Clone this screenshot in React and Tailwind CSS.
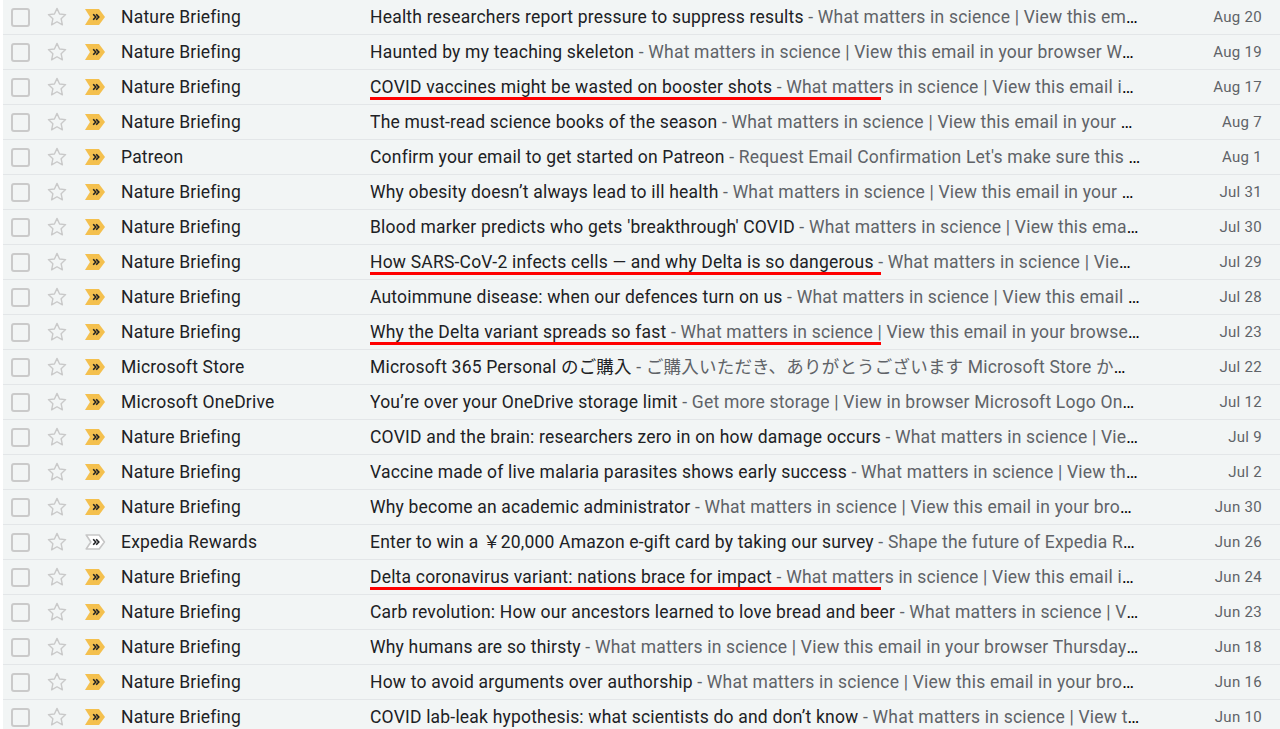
import React from "react";

const rows = [
  ["Nature Briefing", "Health researchers report pressure to suppress results", "What matters in science | View this email in your browser Friday 20 August 2021", "Aug 20"],
  ["Nature Briefing", "Haunted by my teaching skeleton", "What matters in science | View this email in your browser Wednesday 18 August 2021", "Aug 19"],
  ["Nature Briefing", "COVID vaccines might be wasted on booster shots", "What matters in science | View this email in your browser Tuesday 17 August 2021", "Aug 17", true],
  ["Nature Briefing", "The must-read science books of the season", "What matters in science | View this email in your browser Friday 6 August 2021", "Aug 7"],
  ["Patreon", "Confirm your email to get started on Patreon", "Request Email Confirmation Let's make sure this is the right address", "Aug 1"],
  ["Nature Briefing", "Why obesity doesn’t always lead to ill health", "What matters in science | View this email in your browser Friday 30 July 2021", "Jul 31"],
  ["Nature Briefing", "Blood marker predicts who gets 'breakthrough' COVID", "What matters in science | View this email in your browser Thursday 29 July", "Jul 30"],
  ["Nature Briefing", "How SARS-CoV-2 infects cells — and why Delta is so dangerous", "What matters in science | View this email in your browser", "Jul 29", true],
  ["Nature Briefing", "Autoimmune disease: when our defences turn on us", "What matters in science | View this email in your browser Tuesday", "Jul 28"],
  ["Nature Briefing", "Why the Delta variant spreads so fast", "What matters in science | View this email in your browser Thursday 22 July 2021", "Jul 23", true],
  ["Microsoft Store", "Microsoft 365 Personal のご購入", "ご購入いただき、ありがとうございます Microsoft Store からのご注文", "Jul 22"],
  ["Microsoft OneDrive", "You’re over your OneDrive storage limit", "Get more storage | View in browser Microsoft Logo OneDrive storage", "Jul 12"],
  ["Nature Briefing", "COVID and the brain: researchers zero in on how damage occurs", "What matters in science | View this email in your browser", "Jul 9"],
  ["Nature Briefing", "Vaccine made of live malaria parasites shows early success", "What matters in science | View this email in your browser", "Jul 2"],
  ["Nature Briefing", "Why become an academic administrator", "What matters in science | View this email in your browser Tuesday 29 June", "Jun 30"],
  ["Expedia Rewards", "Enter to win a ￥20,000 Amazon e-gift card by taking our survey", "Shape the future of Expedia Rewards with your feedback", "Jun 26", false, true],
  ["Nature Briefing", "Delta coronavirus variant: nations brace for impact", "What matters in science | View this email in your browser Wednesday", "Jun 24", true],
  ["Nature Briefing", "Carb revolution: How our ancestors learned to love bread and beer", "What matters in science | View this email in your browser", "Jun 23"],
  ["Nature Briefing", "Why humans are so thirsty", "What matters in science | View this email in your browser Thursday 17 June 2021", "Jun 18"],
  ["Nature Briefing", "How to avoid arguments over authorship", "What matters in science | View this email in your browser Tuesday 15 June", "Jun 16"],
  ["Nature Briefing", "COVID lab-leak hypothesis: what scientists do and don’t know", "What matters in science | View this email in your browser", "Jun 10"],
];

function Star() {
  return (
    <svg width="22" height="22" viewBox="0 0 24 24" className="block">
      <path
        d="M12 2.6l2.8 6.1 6.6.7-4.9 4.5 1.4 6.6L12 17.2l-5.9 3.3 1.4-6.6-4.9-4.5 6.6-.7z"
        fill="none"
        stroke="#c9c9c9"
        strokeWidth="1.5"
        strokeLinejoin="round"
      />
    </svg>
  );
}

function Marker({ gray }) {
  return (
    <svg width="21" height="16" viewBox="0 0 21 16" className="block">
      <path
        d={gray ? "M1.2 1h13l5.2 7-5.2 7h-13l4.6-7z" : "M0 0h14l6 8-6 8H0l5-8z"}
        fill={gray ? "#fff" : "#f4c04e"}
        stroke={gray ? "#c6c6c6" : "none"}
        strokeWidth={gray ? "1.6" : "0"}
        strokeLinejoin="round"
      />
      <path d="M8.2 5.2l2.6 2.8-2.6 2.8M11.2 5.2l2.6 2.8-2.6 2.8" fill="none" stroke="#202124" strokeWidth="1.6" />
    </svg>
  );
}

export default function App() {
  return (
    <div
      className="w-[1280px] h-[729px] overflow-hidden bg-white pl-[3px]"
      style={{ fontFamily: "Roboto, 'Noto Sans CJK JP', sans-serif" }}
    >
      <div className="bg-[#f2f5f5]">
        {rows.map(([sender, subject, snippet, date, underline, gray], i) => (
          <div
            key={i}
            className="relative flex items-center h-[35px] border-b border-[#e3e6e8] text-[17.5px] tracking-[0.2px]"
          >
            <div className="w-[8px] shrink-0" />
            <div className="w-[19px] h-[19px] shrink-0 rounded-[3px] border-2 border-[#cacaca]" />
            <div className="w-[16px] shrink-0" />
            <Star />
            <div className="w-[17px] shrink-0" />
            <Marker gray={gray} />
            <div className="w-[15px] shrink-0" />
            <div className="w-[249px] shrink-0 truncate text-[#202124]">{sender}</div>
            <div className="w-[772px] shrink-0 truncate">
              <span className="text-[#202124]">{subject}</span>
              <span className="text-[#5f6368]"> - {snippet}</span>
            </div>
            <div className="w-[120px] shrink-0 text-right text-[15px] tracking-[0.3px] text-[#5f6368]">{date}</div>
            {underline && (
              <div className="absolute left-[367px] top-[27px] w-[511px] h-[3px] bg-[#ff0000]" />
            )}
          </div>
        ))}
      </div>
    </div>
  );
}
